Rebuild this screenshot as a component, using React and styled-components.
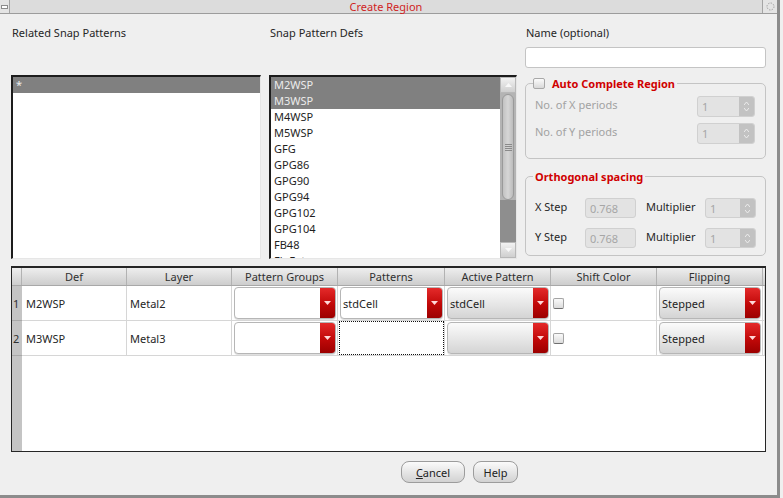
import React from 'react';
import styled, { createGlobalStyle } from 'styled-components';

const GlobalStyle = createGlobalStyle`
  * { box-sizing: border-box; }
  html, body { margin: 0; padding: 0; background: #efefef; }
  body {
    font-family: "Noto Sans", "DejaVu Sans", sans-serif;
    font-size: 11px;
    color: #262626;
  }
`;

const Window = styled.div`
  width: 780px;
  height: 498px;
  background: #efefef;
  border-right: 3px solid #8c8c8c;
  border-bottom: 3px solid #8c8c8c;
  display: flex;
  flex-direction: column;
  overflow: hidden;
`;

const TitleBar = styled.div`
  flex: 0 0 14px;
  display: flex;
  background: #dcdcdc;
  border-bottom: 1px solid #9c9c9c;
`;

const TitleCorner = styled.div`
  width: ${p => p.$w}px;
  display: flex;
  align-items: center;
  justify-content: center;
  background: #e4e4e4;
  ${p => (p.$side === 'left' ? 'border-right' : 'border-left')}: 1px solid #a4a4a4;
`;

const TitleText = styled.div`
  flex: 1;
  text-align: center;
  color: #d01f1f;
  line-height: 13px;
`;

const Body = styled.div`
  flex: 1;
  display: flex;
  flex-direction: column;
  padding: 12px 11px 0 11px;
`;

const TopGrid = styled.div`
  display: grid;
  grid-template-columns: 250px 248px 241px;
  column-gap: 8px;
`;

const Column = styled.div`
  display: flex;
  flex-direction: column;
`;

const FieldLabel = styled.div`
  height: 14px;
  line-height: 14px;
  padding-left: 1px;
`;

const ListBox = styled.div`
  margin-top: 35px;
  height: 184px;
  display: flex;
  background: #fff;
  border-top: 2px solid #1c1c1c;
  border-left: 2px solid #1c1c1c;
  border-right: 1px solid #e6e6e6;
  border-bottom: 1px solid #e6e6e6;
  overflow: hidden;
`;

const ListItems = styled.div`
  flex: 1;
  display: flex;
  flex-direction: column;
`;

const ListRow = styled.div`
  flex: 0 0 16px;
  height: 16px;
  line-height: 16px;
  padding-left: 3px;
  background: ${p => (p.$selected ? '#808080' : 'transparent')};
  color: ${p => (p.$selected ? '#ececec' : '#1e1e1e')};
`;

const ScrollBar = styled.div`
  width: 16px;
  display: flex;
  flex-direction: column;
  background: #8e8e8e;
`;

const ScrollButton = styled.div`
  flex: 0 0 16px;
  display: flex;
  align-items: center;
  justify-content: center;
  background: linear-gradient(#f2f2f2, #cfcfcf);
  border: 1px solid #b8b8b8;
`;

const ScrollThumb = styled.div`
  flex: 0 0 107px;
  background: #b4b4b4;
  display: flex;
  padding: 1px 2px 0 2px;
`;

const ScrollGutter = styled.div`
  flex: 1;
`;

const ThumbBody = styled.div`
  flex: 1;
  border-radius: 7px;
  border: 1px solid #9a9a9a;
  background: linear-gradient(to right, #c2c2c2, #d6d6d6 50%, #bcbcbc);
  display: flex;
  align-items: center;
  justify-content: center;
`;

const Grip = styled.div`
  width: 7px;
  height: 7px;
  background: repeating-linear-gradient(#8a8a8a 0 1px, transparent 1px 2px);
`;

const NameInput = styled.div`
  margin-top: 7px;
  height: 21px;
  background: #fff;
  border: 1px solid #c4c4c4;
  border-radius: 3px;
`;

const GroupFrame = styled.div`
  position: relative;
  margin-top: ${p => p.$mt}px;
  border: 1px solid #c4c4c4;
  border-radius: 5px;
  padding: ${p => p.$pad};
`;

const GroupTitle = styled.div`
  position: absolute;
  top: -7px;
  left: 7px;
  height: 13px;
  display: flex;
  align-items: center;
  gap: 7px;
  padding: 0 2px 0 ${p => p.$inset}px;
  background: #efefef;
  color: #d00000;
  font-weight: bold;
  line-height: 13px;
`;

const TitleCheck = styled.div`
  width: 12px;
  height: 11px;
  border: 1px solid #a8a8a8;
  border-radius: 2px;
  background: linear-gradient(#fbfbfb, #d9d9d9);
`;

const PeriodRow = styled.div`
  height: 21px;
  display: flex;
  align-items: center;
  justify-content: space-between;
  padding: 0 10px 0 9px;
  color: #a2a2a2;
  & + & { margin-top: 6px; }
`;

const PeriodLabel = styled.span`
  margin-bottom: 5px;
`;

const SpinBox = styled.div`
  width: ${p => p.$w}px;
  height: ${p => p.$h}px;
  display: flex;
  border: 1px solid #d0d0d0;
  border-radius: 3px;
  background: #e3e3e3;
  overflow: hidden;
`;

const SpinValue = styled.div`
  flex: 1;
  display: flex;
  align-items: center;
  padding-left: 4px;
  color: #a6a6a6;
`;

const SpinButtons = styled.div`
  width: 15px;
  display: flex;
  flex-direction: column;
  align-items: center;
  justify-content: center;
  gap: 3px;
  background: #c2c2c2;
`;

const StepGrid = styled.div`
  display: grid;
  grid-template-columns: 50px 51px 69px 51px;
  grid-auto-rows: 20px;
  row-gap: 10px;
  padding-left: 9px;
  align-items: center;
`;

const StepLabel = styled.div`
  padding-left: ${p => p.$indent || 0}px;
  padding-bottom: 3px;
  color: #262626;
`;

const StepInput = styled.div`
  height: 20px;
  display: flex;
  align-items: center;
  padding-left: 4px;
  background: #e3e3e3;
  border: 1px solid #d0d0d0;
  border-radius: 3px;
  color: #a6a6a6;
`;

const Table = styled.div`
  margin-top: 7px;
  height: 186px;
  display: flex;
  flex-direction: column;
  background: #fff;
  border: 1px solid #262626;
  border-top-width: 2px;
`;

const cols = '10px 105px 105px 106px 107px 106px 106px 106px 1fr';

const HeaderRow = styled.div`
  display: grid;
  grid-template-columns: ${cols};
  height: 18px;
  background: linear-gradient(#eeeeee, #cdcdcd);
  border-bottom: 1px solid #a8a8a8;
`;

const HeaderCell = styled.div`
  text-align: center;
  line-height: 17px;
  border-right: 1px solid #b2b2b2;
  color: #303030;
`;

const BodyArea = styled.div`
  flex: 1;
  display: flex;
  flex-direction: column;
  background: linear-gradient(to right, #c4c4c4 10px, #fff 10px);
`;

const Row = styled.div`
  display: grid;
  grid-template-columns: ${cols};
  height: 35px;
`;

const Cell = styled.div`
  display: flex;
  align-items: center;
  border-right: 1px solid #d6d6d6;
  border-bottom: 1px solid #d6d6d6;
  background: #fff;
  padding: ${p => p.$pad || '0 0 0 4px'};
`;

const RowNum = styled.div`
  display: flex;
  align-items: center;
  padding-left: 1px;
  background: #c4c4c4;
  border-bottom: 1px solid #a8a8a8;
  color: #303030;
`;

const Combo = styled.div`
  flex: 1;
  align-self: stretch;
  display: flex;
  border: 1px solid #b6b6b6;
  border-radius: 4px;
  overflow: hidden;
  background: ${p => (p.$button ? 'linear-gradient(#fbfbfb, #e4e4e4 60%, #d4d4d4)' : '#fff')};
  box-shadow: 0 1px 0 rgba(0, 0, 0, 0.12);
`;

const ComboText = styled.div`
  flex: 1;
  display: flex;
  align-items: center;
  padding-left: 2px;
  color: #1e1e1e;
`;

const ComboArrow = styled.div`
  width: 15px;
  display: flex;
  align-items: center;
  justify-content: center;
  background: linear-gradient(#e42a2a, #c00808 55%, #9c0000);
`;

const FocusBox = styled.div`
  flex: 1;
  align-self: stretch;
  border: 1px dotted #111;
`;

const CellCheck = styled.div`
  width: 11px;
  height: 11px;
  border: 1px solid #a4a4a4;
  border-bottom-color: #6e6e6e;
  border-radius: 2px;
  background: linear-gradient(#fafafa, #dcdcdc);
`;

const ButtonRow = styled.div`
  display: flex;
  gap: 8px;
  margin-top: 9px;
  padding-left: 390px;
`;

const PushButton = styled.div`
  width: ${p => p.$w}px;
  height: 22px;
  display: flex;
  align-items: center;
  justify-content: center;
  border: 1px solid #9c9c9c;
  border-radius: 8px;
  background: linear-gradient(#fbfbfb, #e2e2e2 60%, #d2d2d2);
  color: #222;
  & u { text-decoration: underline; }
`;

const DownTri = ({ color = '#ffd8d8' }) => (
  <svg width="7" height="4" viewBox="0 0 7 4">
    <path d="M0 0 L7 0 L3.5 4 Z" fill={color} />
  </svg>
);

const UpTri = ({ color = '#f4f4f4' }) => (
  <svg width="7" height="4" viewBox="0 0 7 4">
    <path d="M0 4 L7 4 L3.5 0 Z" fill={color} />
  </svg>
);

const Spin = ({ w, h }) => (
  <SpinBox $w={w} $h={h}>
    <SpinValue>1</SpinValue>
    <SpinButtons>
      <svg width="5" height="3" viewBox="0 0 5 3"><path d="M0 3 L2.5 0 L5 3" fill="none" stroke="#ececec" /></svg>
      <svg width="5" height="3" viewBox="0 0 5 3"><path d="M0 0 L2.5 3 L5 0" fill="none" stroke="#ececec" /></svg>
    </SpinButtons>
  </SpinBox>
);

const defs = ['M2WSP', 'M3WSP', 'M4WSP', 'M5WSP', 'GFG', 'GPG86', 'GPG90', 'GPG94', 'GPG102', 'GPG104', 'FB48', 'FinFet'];
const headers = ['Def', 'Layer', 'Pattern Groups', 'Patterns', 'Active Pattern', 'Shift Color', 'Flipping'];

const rows = [
  { n: 1, def: 'M2WSP', layer: 'Metal2', patterns: 'stdCell', active: 'stdCell' },
  { n: 2, def: 'M3WSP', layer: 'Metal3', patterns: null, active: '' },
];

export default function App() {
  return (
    <>
      <GlobalStyle />
      <Window>
        <TitleBar>
          <TitleCorner $side="left" $w={10}>
            <svg width="7" height="4" viewBox="0 0 7 4">
              <rect x="0.5" y="0.5" width="6" height="3" fill="#fff" stroke="#8c8c8c" />
            </svg>
          </TitleCorner>
          <TitleText>Create Region</TitleText>
          <TitleCorner $side="right" $w={15}>
            <svg width="9" height="9" viewBox="0 0 9 9">
              <circle cx="4.5" cy="4.5" r="3.5" fill="none" stroke="#a0a0a0" strokeDasharray="1.5 1.2" />
            </svg>
          </TitleCorner>
        </TitleBar>

        <Body>
          <TopGrid>
            <Column>
              <FieldLabel>Related Snap Patterns</FieldLabel>
              <ListBox>
                <ListItems>
                  <ListRow $selected>*</ListRow>
                </ListItems>
              </ListBox>
            </Column>

            <Column>
              <FieldLabel>Snap Pattern Defs</FieldLabel>
              <ListBox>
                <ListItems>
                  {defs.map((d, i) => (
                    <ListRow key={d} $selected={i < 2}>{d}</ListRow>
                  ))}
                </ListItems>
                <ScrollBar>
                  <ScrollButton><UpTri color="#f8f8f8" /></ScrollButton>
                  <ScrollThumb>
                    <ThumbBody><Grip /></ThumbBody>
                  </ScrollThumb>
                  <ScrollGutter />
                  <ScrollButton><DownTri color="#f8f8f8" /></ScrollButton>
                </ScrollBar>
              </ListBox>
            </Column>

            <Column>
              <FieldLabel>Name (optional)</FieldLabel>
              <NameInput />
              <GroupFrame $mt={15} $pad="12px 0 14px 0">
                <GroupTitle $inset={0}>
                  <TitleCheck />
                  Auto Complete Region
                </GroupTitle>
                <PeriodRow>
                  <PeriodLabel>No. of X periods</PeriodLabel>
                  <Spin w={58} h={21} />
                </PeriodRow>
                <PeriodRow>
                  <PeriodLabel>No. of Y periods</PeriodLabel>
                  <Spin w={58} h={21} />
                </PeriodRow>
              </GroupFrame>
              <GroupFrame $mt={17} $pad="21px 0 7px 0">
                <GroupTitle $inset={2}>Orthogonal spacing</GroupTitle>
                <StepGrid>
                  <StepLabel>X Step</StepLabel>
                  <StepInput>0.768</StepInput>
                  <StepLabel $indent={10}>Multiplier</StepLabel>
                  <Spin w={51} h={20} />
                  <StepLabel>Y Step</StepLabel>
                  <StepInput>0.768</StepInput>
                  <StepLabel $indent={10}>Multiplier</StepLabel>
                  <Spin w={51} h={20} />
                </StepGrid>
              </GroupFrame>
            </Column>
          </TopGrid>

          <Table>
            <HeaderRow>
              <HeaderCell />
              {headers.map(h => (
                <HeaderCell key={h}>{h}</HeaderCell>
              ))}
              <div />
            </HeaderRow>
            <BodyArea>
              {rows.map(r => (
                <Row key={r.n}>
                  <RowNum>{r.n}</RowNum>
                  <Cell>{r.def}</Cell>
                  <Cell $pad="0 0 0 3px">{r.layer}</Cell>
                  <Cell $pad="1px 1px 1px 2px">
                    <Combo>
                      <ComboText />
                      <ComboArrow><DownTri /></ComboArrow>
                    </Combo>
                  </Cell>
                  {r.patterns ? (
                    <Cell $pad="1px 1px 1px 2px">
                      <Combo>
                        <ComboText>{r.patterns}</ComboText>
                        <ComboArrow><DownTri /></ComboArrow>
                      </Combo>
                    </Cell>
                  ) : (
                    <Cell $pad="0 0 0 1px">
                      <FocusBox />
                    </Cell>
                  )}
                  <Cell $pad="1px 1px 1px 2px">
                    <Combo $button>
                      <ComboText>{r.active}</ComboText>
                      <ComboArrow><DownTri /></ComboArrow>
                    </Combo>
                  </Cell>
                  <Cell $pad="0 0 0 2px">
                    <CellCheck />
                  </Cell>
                  <Cell $pad="1px 1px 1px 2px">
                    <Combo $button>
                      <ComboText>Stepped</ComboText>
                      <ComboArrow><DownTri /></ComboArrow>
                    </Combo>
                  </Cell>
                  <Cell $pad="0" />
                </Row>
              ))}
            </BodyArea>
          </Table>

          <ButtonRow>
            <PushButton $w={64}><span><u>C</u>ancel</span></PushButton>
            <PushButton $w={45}>Help</PushButton>
          </ButtonRow>
        </Body>
      </Window>
    </>
  );
}
